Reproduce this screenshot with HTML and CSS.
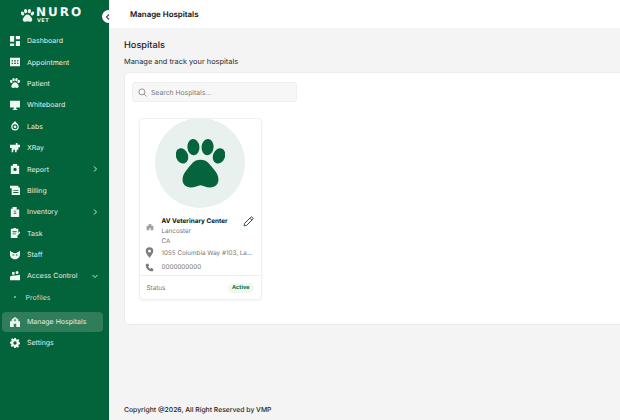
FILE: index.html
```html
<!DOCTYPE html>
<html lang="en">
<head>
<meta charset="utf-8">
<title>Manage Hospitals</title>
<link rel="stylesheet" href="styles.css">
</head>
<body>
<svg width="0" height="0" class="defs">
  <defs>
    <symbol id="paw" viewBox="0 0 90 90">
      <ellipse cx="11" cy="31" rx="11" ry="14.500" transform="rotate(-20 11 31)"/>
      <ellipse cx="32" cy="15" rx="11" ry="15" transform="rotate(-5 32 15)"/>
      <ellipse cx="58" cy="15" rx="11" ry="15" transform="rotate(5 58 15)"/>
      <ellipse cx="79" cy="31" rx="11" ry="14.500" transform="rotate(20 79 31)"/>
      <path d="M45 38C32 38 28 47 21 55 15 62 12 67 12 75 12 84 19 89 27 89 35 89 40 86 45 85 50 86 55 89 63 89 71 89 78 84 78 75 78 67 75 62 69 55 62 47 58 38 45 38z"/>
    </symbol>
  </defs>
</svg>
<div class="app">
  <aside class="sidebar">
    <div class="logo">
      <svg class="logo-paw" viewBox="0 0 90 90"><use href="#paw"/></svg>
      <div class="logo-text">
        <span class="logo-name">NURO</span>
        <span class="logo-sub">VET</span>
      </div>
    </div>
    <button class="toggle" type="button" aria-label="Collapse">
      <svg viewBox="0 0 10 10"><path d="M6 2.500 3.500 5 6 7.500"/></svg>
    </button>
    <nav class="nav">
      <a class="item"><svg class="ico" viewBox="0 0 12 12"><path d="M0 0h5v7H0zM7 0h5v4H7zM7 6h5v6H7zM0 9h5v3H0z"/></svg><span>Dashboard</span></a>
      <a class="item"><svg class="ico" viewBox="0 0 12 12"><path fill-rule="evenodd" d="M0 1h12v10H0zM2 4v1.500h1.500V4zM5 4v1.500h2V4zM8.500 4v1.500H10V4zM2 7v1.500h1.500V7zM5 7v1.500h2V7zM8.500 7v1.500H10V7z"/></svg><span>Appointment</span></a>
      <a class="item"><svg class="ico" viewBox="0 0 90 90"><use href="#paw"/></svg><span>Patient</span></a>
      <a class="item"><svg class="ico" viewBox="0 0 12 12"><path d="M0 1h12v8H7.500v2H9v1H3v-1h1.500V9H0z"/></svg><span>Whiteboard</span></a>
      <a class="item"><svg class="ico" viewBox="0 0 12 12"><path fill-rule="evenodd" d="M6 0c1 2 4.500 3 4.500 7A4.500 4.500 0 0 1 1.500 7C1.500 3 5 2 6 0zM6 4a3 3 0 1 0 0 6 3 3 0 0 0 0-6z"/><circle cx="6" cy="7" r="1.600"/></svg><span>Labs</span></a>
      <a class="item"><svg class="ico" viewBox="0 0 12 12"><path d="M0 2h7V0h2v2h3v3h-2v3H8v3H6V8H4v3H2V6H0z"/></svg><span>XRay</span></a>
      <a class="item"><svg class="ico" viewBox="0 0 12 12"><path fill-rule="evenodd" d="M1 2h2.500V0h5v2H11v10H1zM6 4.500a2 2 0 1 0 0 4 2 2 0 0 0 0-4z"/></svg><span>Report</span><svg class="chev" viewBox="0 0 8 8"><path d="M3 1.500 5.500 4 3 6.500"/></svg></a>
      <a class="item"><svg class="ico" viewBox="0 0 12 12"><path fill-rule="evenodd" d="M0 1h10v2h2v9H2V4H0zM4 6v1h6V6zM4 8.500v1h6v-1z"/></svg><span>Billing</span></a>
      <a class="item"><svg class="ico" viewBox="0 0 12 12"><path fill-rule="evenodd" d="M3 0h5v3h3v9H1V2h2zM4.500 4.500v1h3v-1zM4.500 7v1h3V7z"/></svg><span>Inventory</span><svg class="chev" viewBox="0 0 8 8"><path d="M3 1.500 5.500 4 3 6.500"/></svg></a>
      <a class="item"><svg class="ico" viewBox="0 0 12 12"><path fill-rule="evenodd" d="M1 1h3V0h3v1h3v5l2-2v2l-3 3v3H1zM3 4v1h5V4zM3 6.500v1h4v-1z"/></svg><span>Task</span></a>
      <a class="item"><svg class="ico" viewBox="0 0 12 12"><path fill-rule="evenodd" d="M0 1l2 1.500C3 2 4 4 6 4s3-2 4-1.500L12 1v4c0 3-2 6-6 6S0 8 0 5zM3 5.500v1h2v-1zM7 5.500v1h2v-1z"/></svg><span>Staff</span></a>
      <a class="item"><svg class="ico" viewBox="0 0 12 12"><path d="M4 1a1.800 1.800 0 1 1 0 3.600A1.800 1.800 0 0 1 4 1zM8.500 0a1.800 1.800 0 1 1 0 3.600 1.800 1.800 0 0 1 0-3.600zM0 6.500 3 5.500h3.500L12 4.500V11H0z"/></svg><span>Access Control</span><svg class="chev" viewBox="0 0 8 8"><path d="M1.500 3 4 5.500 6.500 3"/></svg></a>
      <a class="item sub"><span class="dot"></span><span>Profiles</span></a>
      <a class="item active"><svg class="ico" viewBox="0 0 12 12"><path fill-rule="evenodd" d="M6 0l4 3v2h2v7H0V5h2V3zM5.500 2v1.200H4.500v1h1v1.200h1V4.200h1v-1h-1V2zM4.500 8v4h3V8z"/></svg><span>Manage Hospitals</span></a>
      <a class="item"><svg class="ico" viewBox="0 0 12 12"><path fill-rule="evenodd" d="M5 0h2l.3 1.600 1.100.5L9.800 1.200l1.400 1.400-.9 1.400.5 1.100 1.200.3v2l-1.600.3-.5 1.100.9 1.400-1.400 1.400-1.400-.9-1.100.5L7 12H5l-.3-1.600-1.100-.5-1.400.9L.8 9.400l.9-1.400-.5-1.100L0 6.600v-2l1.600-.3.500-1.100-.9-1.400L2.600.4l1.400.9L5 .9zM6 4a2 2 0 1 0 0 4 2 2 0 0 0 0-4z"/></svg><span>Settings</span></a>
    </nav>
  </aside>
  <div class="main">
    <header class="topbar"><h1>Manage Hospitals</h1></header>
    <main class="content">
      <h2>Hospitals</h2>
      <p class="lead">Manage and track your hospitals</p>
      <section class="panel">
        <label class="search">
          <svg viewBox="0 0 12 12"><circle cx="5.200" cy="5.200" r="4"/><path d="m8.200 8.200 3 3"/></svg>
          <span>Search Hospitals...</span>
        </label>
        <article class="card">
          <div class="avatar"><svg class="avatar-paw" viewBox="0 0 90 90"><use href="#paw"/></svg></div>
          <div class="info">
            <div class="row row-name">
              <svg class="info-ico building" viewBox="0 0 12 12"><path fill-rule="evenodd" d="M4 1.500h4V4h3v7H1V4h3zM5 7.500V11h2V7.500zM5.500 2.500v1h1v-1z"/></svg>
              <div class="name-block">
                <strong>AV Veterinary Center</strong>
                <span>Lancoster</span>
                <span>CA</span>
              </div>
              <svg class="edit" viewBox="0 0 12 12"><path d="M1.200 10.800l.6-2.800L8.500 1.300a1 1 0 0 1 1.400 0l.8.800a1 1 0 0 1 0 1.400L4 10.200zM7.500 2.300l2.200 2.200"/></svg>
            </div>
            <div class="row row-address">
              <svg class="info-ico pin" viewBox="0 0 12 14"><path fill-rule="evenodd" d="M6 0a5 5 0 0 1 5 5c0 3.500-5 9-5 9S1 8.500 1 5a5 5 0 0 1 5-5zM6 3a2 2 0 1 0 0 4 2 2 0 0 0 0-4z"/></svg>
              <span class="address">1055 Columbia Way #103, La...</span>
            </div>
            <div class="row row-phone">
              <svg class="info-ico" viewBox="0 0 12 12"><path d="M2.500 1 4.500 1l1 2.800-1.200 1.200c.6 1.200 1.500 2.100 2.700 2.700L8.200 6.500l2.800 1v2c0 .8-.6 1.500-1.500 1.500C5 11 1 7 1 2.500 1 1.600 1.700 1 2.500 1z"/></svg>
              <span>0000000000</span>
            </div>
          </div>
          <div class="status">
            <span>Status</span>
            <span class="badge">Active</span>
          </div>
        </article>
      </section>
      <footer class="copyright">Copyright @2026, All Right Reserved by VMP</footer>
    </main>
  </div>
</div>
</body>
</html>
```
FILE: styles.css
```css
* { box-sizing: border-box; }
html, body { margin: 0; height: 100%; overflow: hidden; }
body { font-family: "Inter", "Liberation Sans", sans-serif; background: #f4f4f4; color: #1a1a1a; text-rendering: geometricPrecision; }
.defs { position: absolute; }
.app { display: flex; width: 620px; height: 420px; opacity: .999; }

.sidebar { position: relative; width: 108.500px; flex: none; background: #03633b; color: #e6f0ea; font-family: "Inter", sans-serif; }
.logo { display: flex; align-items: flex-start; gap: 2px; height: 30px; padding: 6.500px 0 0 21px; }
.logo-paw { width: 13px; height: 13px; margin-top: 2.500px; fill: #e8f1ec; }
.logo-text { display: flex; flex-direction: column; gap: 1px; line-height: 1; }
.logo-name { font: 700 12px/11px "DejaVu Sans", sans-serif; letter-spacing: 2px; color: #f4f8f6; }
.logo-sub { margin: 0 0 0 1px; font: 700 5px/5px "DejaVu Sans", sans-serif; letter-spacing: .5px; color: #e8f1ec; }
.toggle { position: absolute; top: 10px; right: -6px; width: 13px; height: 13px; padding: 1.500px; border: 0; border-radius: 50%; background: #fff; }
.toggle svg { display: block; width: 10px; height: 10px; fill: none; stroke: #444; stroke-width: 1.100; }

.nav { display: flex; flex-direction: column; padding: 0 5.500px 0 1.500px; }
.item { display: flex; align-items: center; height: 21.400px; padding-left: 8px; font-size: 7px; white-space: nowrap; }
.ico { width: 10px; height: 10px; flex: none; margin-right: 7.500px; fill: #f2f7f4; }
.chev { width: 8px; height: 8px; margin-left: auto; margin-right: 4.500px; fill: none; stroke: #e6f0ea; stroke-width: .9; }
.sub { padding-left: 12px; color: #c9ddd2; }
.dot { width: 2px; height: 2px; margin-right: 10px; border-radius: 50%; background: #9cc2ad; }
.item.active { height: 20px; margin: 3.500px 0 .3px; border-radius: 4px; background: #2f7d5a; }

.main { flex: 1; min-width: 0; display: flex; flex-direction: column; }
.topbar { height: 28px; flex: none; display: flex; align-items: center; padding-left: 21.500px; background: #fff; }
h1 { margin: 0; font-size: 7.900px; font-weight: 600; color: #111; }
.content { flex: 1; display: flex; flex-direction: column; padding: 12px 0 0 15.500px; min-height: 0; }
h2 { margin: 0; font-size: 9.200px; line-height: 12px; font-weight: 500; color: #222; }
.lead { margin: 4px 0 0; font-size: 7.400px; line-height: 11px; color: #2b2b2b; }
.panel { height: 253px; margin: 5px -12px 0 0; padding: 9px 0 0 6.500px; background: #fff; border: 1px solid #ececec; border-radius: 5px; }
.search { display: flex; align-items: center; gap: 4.500px; width: 165px; height: 20px; padding-left: 5px; background: #f7f7f7; border: 1px solid #f0f0f0; border-radius: 3px; font-size: 6.800px; color: #777; }
.search svg { width: 9px; height: 9px; fill: none; stroke: #777; stroke-width: 1; }

.card { width: 123px; height: 182px; margin: 16px 0 0 7px; background: #fff; border: 1px solid #f0f0f0; border-radius: 4px; box-shadow: 0 1px 3px rgba(0,0,0,.05); font-family: "Inter", sans-serif; font-size: 6.300px; color: #777; display: flex; flex-direction: column; }
.avatar { width: 90px; height: 90px; margin: -1px auto 0; border-radius: 50%; background: #e9f1ee; display: flex; align-items: center; justify-content: center; flex: none; }
.avatar-paw { width: 49px; height: 49px; fill: #05643c; }
.info { flex: 1; display: flex; flex-direction: column; padding: 8px 6px 0 5.500px; }
.row { display: flex; align-items: center; gap: 7.500px; min-width: 0; }
.row-name { position: relative; }
.row-address { margin-top: 1px; }
.row-phone { margin-top: 4.500px; }
.info-ico { width: 9px; height: 9px; flex: none; fill: #7c7c7c; }
.building { align-self: flex-start; width: 8px; height: 8px; margin: 7px .5px 0; fill: #a0a0a0; }
.pin { height: 11px; }
.name-block { display: flex; flex-direction: column; line-height: 10px; }
.name-block strong { font-size: 6.400px; font-weight: 700; color: #111; }
.edit { position: absolute; right: 1px; top: 0; width: 11px; height: 11px; fill: none; stroke: #154c35; stroke-width: 1; }
.address { white-space: nowrap; }
.status { display: flex; align-items: center; justify-content: space-between; height: 24px; flex: none; padding: 0 7px; border-top: 1px solid #efefef; }
.badge { padding: 2px 4px; border-radius: 6px; background: #eef8f1; color: #0a6b3d; font-weight: 700; font-size: 5.600px; }
.copyright { margin-top: auto; padding-bottom: 6px; font-size: 6.800px; font-weight: 500; line-height: 9px; color: #222; }
```
